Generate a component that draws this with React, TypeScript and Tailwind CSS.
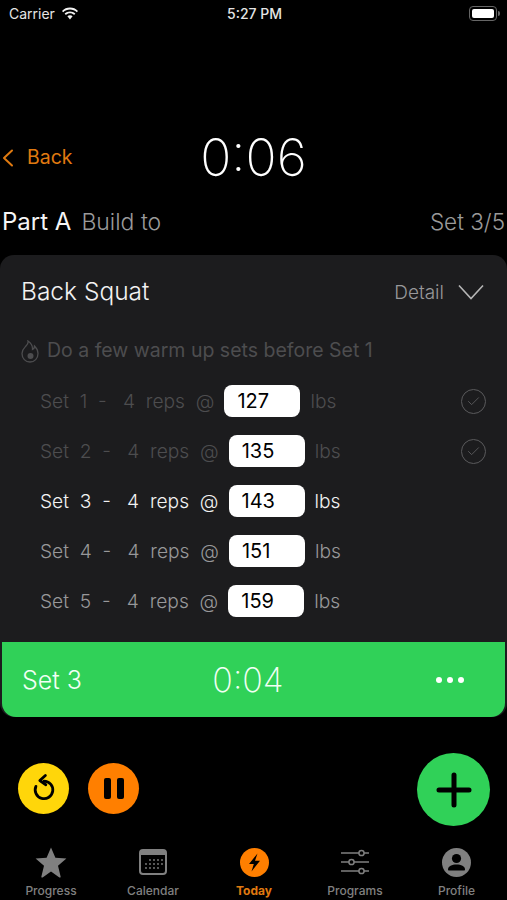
import { Check } from "lucide-react";

const sets = [
  { n: 1, weight: 127, tone: "text-[#4d4d4f]", done: true },
  { n: 2, weight: 135, tone: "text-[#4d4d4f]", done: true },
  { n: 3, weight: 143, tone: "text-[#f2f2f2]", done: false },
  { n: 4, weight: 151, tone: "text-[#98989a]", done: false },
  { n: 5, weight: 159, tone: "text-[#98989a]", done: false },
];

function StarIcon() {
  return (
    <svg width="32" height="32" viewBox="0 0 32 32" fill="#808080">
      <path d="M16 1.5l4.4 10.2 11 .9-8.4 7.2 2.6 10.7c.2.9-.4 1.4-1.2.9L16 25.6l-8.4 5.800c-.8.5-1.400 0-1.200-.9L9 19.800.6 12.600l11-.9z" />
    </svg>
  );
}

function CalendarIcon() {
  return (
    <svg width="28" height="26" viewBox="0 0 28 26" fill="none">
      <rect x="1" y="1" width="26" height="24" rx="3" stroke="#808080" strokeWidth="2" />
      <rect x="1" y="1" width="26" height="5" fill="#808080" />
      {[11, 15, 19, 23].map((x) => (
        <circle key={x} cx={x} cy="11" r="0.9" fill="#808080" />
      ))}
      {[7, 11, 15, 19, 23].map((x) => (
        <circle key={x} cx={x} cy="15" r="0.9" fill="#808080" />
      ))}
      {[7, 11, 15, 19].map((x) => (
        <circle key={x} cx={x} cy="19" r="0.9" fill="#808080" />
      ))}
    </svg>
  );
}

function BoltIcon() {
  return (
    <svg width="29" height="29" viewBox="0 0 29 29">
      <circle cx="14.5" cy="14.5" r="14.5" fill="#ff7f00" />
      <path d="M17.5 5.500L9 16h4.800l-2.300 7.500L20 12.800h-5z" fill="#000" />
    </svg>
  );
}

function SlidersIcon() {
  return (
    <svg width="30" height="26" viewBox="0 0 30 26" fill="none" stroke="#808080" strokeWidth="1.5">
      <path d="M1 4h18M24 4h5M1 13h8M14 13h15M1 22h18M24 22h5" />
      <circle cx="21.5" cy="4" r="2.6" />
      <circle cx="11.5" cy="13" r="2.6" />
      <circle cx="21.5" cy="22" r="2.6" />
    </svg>
  );
}

function ProfileIcon() {
  return (
    <svg width="29" height="29" viewBox="0 0 29 29">
      <circle cx="14.5" cy="14.5" r="14.5" fill="#808080" />
      <circle cx="14.5" cy="10.5" r="4.6" fill="#000" />
      <path d="M6 21.500c0-3.200 4-5 8.500-5s8.500 1.800 8.500 5c0 .6-.4 1-1 1H7c-.6 0-1-.4-1-1z" fill="#000" />
    </svg>
  );
}

function FlameIcon() {
  return (
    <svg width="18" height="23" viewBox="0 0 18 23" fill="none" stroke="#4d4d4f" strokeWidth="1.3">
      <path d="M7 1c.6 3-1 4-2.600 5.600C2.500 8.500 1 10.500 1 13.500 1 18.500 4.500 22 9 22s8-3.500 8-8.500c0-3-1.500-5.500-3.500-7.500 0 2-.8 3-2 3.500C11.800 6 10 3 7 1z" />
      <circle cx="9.500" cy="16" r="3" fill="#4d4d4f" stroke="none" />
    </svg>
  );
}

function WifiIcon() {
  return (
    <svg width="18" height="13" viewBox="0 0 18 13" fill="#f2f2f2">
      <path d="M9 2.500c2.600 0 5 1 6.800 2.700l1.200-1.300C14.900 1.800 12.100.6 9 .6S3.100 1.800 1 3.900l1.200 1.300C4 3.500 6.400 2.500 9 2.500z" />
      <path d="M9 6.300c1.600 0 3 .6 4.100 1.600l1.300-1.300C13 5.200 11.100 4.400 9 4.400s-4 .8-5.400 2.200l1.300 1.300C6 6.900 7.400 6.300 9 6.300z" />
      <path d="M9 8.200c-1 0-1.900.4-2.600 1L9 12.400l2.600-3.200c-.7-.6-1.600-1-2.600-1z" />
    </svg>
  );
}

function ReplayIcon() {
  return (
    <svg width="26" height="30" viewBox="0 0 28 32" fill="none" stroke="#000" strokeWidth="3" strokeLinecap="round" strokeLinejoin="round">
      <path d="M14 8.500a9.500 9.500 0 1 1-8.700 5.700" />
      <path d="M15.500 2.500L9.500 8l6.500 4.500" />
    </svg>
  );
}

const tabs = [
  { label: "Progress", icon: <StarIcon />, active: false, w: "w-[102px]" },
  { label: "Calendar", icon: <CalendarIcon />, active: false, w: "w-[102px]" },
  { label: "Today", icon: <BoltIcon />, active: true, w: "w-[100px]" },
  { label: "Programs", icon: <SlidersIcon />, active: false, w: "w-[102px]" },
  { label: "Profile", icon: <ProfileIcon />, active: false, w: "w-[101px]" },
];

export default function App() {
  return (
    <div className="w-[507px] h-[900px] overflow-hidden bg-black flex flex-col font-['Inter',sans-serif] text-white">
      {/* status bar */}
      <div className="h-[27px] shrink-0 grid grid-cols-3 items-center pl-[9px] pr-[7px] text-[14px] text-[#e5e5e5]">
        <div className="flex items-center gap-[6px]">
          <span>Carrier</span>
          <WifiIcon />
        </div>
        <div className="text-center font-medium">5:27 PM</div>
        <div className="flex justify-end">
          <div className="flex items-center gap-[1px]">
            <div className="w-[28px] h-[15px] rounded-[4px] border border-[#666] p-[2px]">
              <div className="w-full h-full rounded-[2px] bg-white" />
            </div>
            <div className="w-[2px] h-[5px] bg-[#666] rounded-r-sm" />
          </div>
        </div>
      </div>

      {/* timer row */}
      <div className="mt-[93px] h-[76px] shrink-0 grid grid-cols-3 items-center">
        <div className="flex items-center gap-[13px] pl-[2px] text-[19.5px] text-[#e07a10]">
          <svg width="12" height="18" viewBox="0 0 12 18" fill="none" stroke="#e07a10" strokeWidth="2" strokeLinecap="round" strokeLinejoin="round">
            <path d="M10 1.500L2 9l8 7.500" />
          </svg>
          <span>Back</span>
        </div>
        <div className="text-center text-[51.5px] font-extralight leading-none">0:06</div>
        <div />
      </div>

      {/* part row */}
      <div className="mt-[8px] h-[36px] shrink-0 flex items-center px-[2px] text-[24px]">
        <span className="text-[#f5f5f5]">Part A</span>
        <span className="ml-[10px] text-[23px] font-light text-[#9a9a9a]">Build to</span>
        <span className="ml-auto text-[22.5px] font-light text-[#9a9a9a]">Set 3/5</span>
      </div>

      {/* card */}
      <div className="mt-[15px] shrink-0 bg-[#1c1c1e] rounded-[14px] flex flex-col">
        <div className="h-[73px] flex items-center pl-[21px] pr-[23px]">
          <span className="text-[24.5px] font-light text-[#f2f2f2]">Back Squat</span>
          <span className="ml-auto mt-[3px] text-[19px] font-light text-[#98989a]">Detail</span>
          <svg className="ml-[14px] mt-[1px]" width="26" height="16" viewBox="0 0 26 16" fill="none" stroke="#b5b5b5" strokeWidth="1.600">
            <path d="M1 1.500l12 13 12-13" />
          </svg>
        </div>

        <div className="h-[46px] flex items-center gap-[8px] pl-[21px] text-[19.5px] text-[#4d4d4f]">
          <FlameIcon />
          <span>Do a few warm up sets before Set 1</span>
        </div>

        <div className="mt-[2px] flex flex-col">
          {sets.map((s) => (
            <div key={s.n} className={`h-[50px] flex items-center pl-[40px] pr-[21px] text-[19.2px] font-light ${s.tone}`}>
              <span className="mt-[1px] whitespace-pre">{`Set  ${s.n}  -   4  reps  @`}</span>
              <div className="ml-[10px] w-[76px] h-[32px] rounded-[8px] bg-white flex items-center pl-[13px] text-[20px] font-normal text-black">
                {s.weight}
              </div>
              <span className="mt-[1px] ml-[10px]">lbs</span>
              {s.done && (
                <div className="ml-auto w-[25px] h-[25px] rounded-full border-[1.5px] border-[#5a5a5c] flex items-center justify-center">
                  <Check size={15} strokeWidth={1.5} color="#5a5a5c" />
                </div>
              )}
            </div>
          ))}
        </div>

        <div className="mt-[16px] mx-[2px] h-[75px] rounded-b-[14px] bg-[#30d158] grid grid-cols-[1fr_auto_1fr] items-center pl-[20px] pr-[41px]">
          <span className="mt-[2px] text-[25px] font-light text-[#f2fff5]">Set 3</span>
          <span className="ml-[10px] text-[34px] font-extralight text-[#f2fff5]">0:04</span>
          <div className="flex justify-end gap-[5px]">
            <div className="w-[6px] h-[6px] rounded-full bg-white" />
            <div className="w-[6px] h-[6px] rounded-full bg-white" />
            <div className="w-[6px] h-[6px] rounded-full bg-white" />
          </div>
        </div>
      </div>

      {/* controls */}
      <div className="mt-[36px] h-[73px] shrink-0 flex items-center pl-[18px] pr-[17px]">
        <div className="mb-[3px] w-[51px] h-[51px] rounded-full bg-[#ffd60a] flex items-center justify-center">
          <ReplayIcon />
        </div>
        <div className="mb-[3px] ml-[19px] w-[51px] h-[51px] rounded-full bg-[#ff7f00] flex items-center justify-center gap-[6px]">
          <div className="w-[7px] h-[21px] rounded-[2px] bg-black" />
          <div className="w-[7px] h-[21px] rounded-[2px] bg-black" />
        </div>
        <div className="ml-auto w-[73px] h-[73px] rounded-full bg-[#30d158] flex items-center justify-center">
          <svg width="36" height="36" viewBox="0 0 36 36" stroke="#000" strokeWidth="5" strokeLinecap="round">
            <path d="M18 3v30M3 18h30" />
          </svg>
        </div>
      </div>

      {/* tab bar */}
      <div className="mt-[20px] flex">
        {tabs.map((t) => (
          <div key={t.label} className={`${t.w} flex flex-col items-center`}>
            <div className="h-[32px] flex items-center justify-center">{t.icon}</div>
            <span className={`mt-[5px] text-[12px] leading-[16px] ${t.active ? "font-bold text-[#e07a10]" : "font-medium text-[#808080]"}`}>
              {t.label}
            </span>
          </div>
        ))}
      </div>
    </div>
  );
}
